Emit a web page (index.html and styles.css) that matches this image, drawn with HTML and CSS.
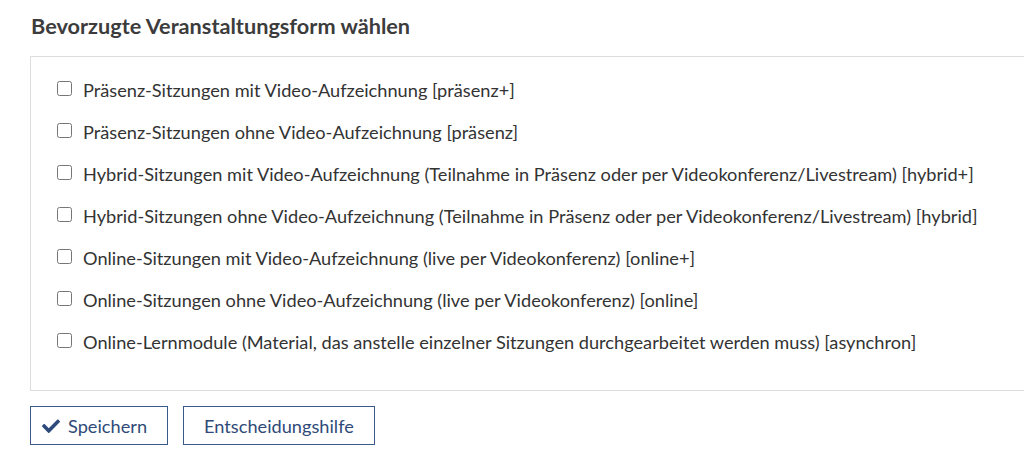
FILE: index.html
```html
<!DOCTYPE html>
<html lang="de">
<head>
    <meta charset="UTF-8">
    <meta name="viewport" content="width=device-width, initial-scale=1.0">
    <title>Bevorzugte Veranstaltungsform wählen</title>
    <link rel="stylesheet" href="styles.css">
</head>
<body>
    <h2 class="title">Bevorzugte Veranstaltungsform wählen</h2>
    <form id="formatForm">
        <div class="options">
            <label class="option"><input type="checkbox" name="format" value="praesenz+"> Präsenz-Sitzungen mit Video-Aufzeichnung [präsenz+]</label>
            <label class="option"><input type="checkbox" name="format" value="praesenz"> Präsenz-Sitzungen ohne Video-Aufzeichnung [präsenz]</label>
            <label class="option"><input type="checkbox" name="format" value="hybrid+"> Hybrid-Sitzungen mit Video-Aufzeichnung (Teilnahme in Präsenz oder per Videokonferenz/Livestream) [hybrid+]</label>
            <label class="option"><input type="checkbox" name="format" value="hybrid"> Hybrid-Sitzungen ohne Video-Aufzeichnung (Teilnahme in Präsenz oder per Videokonferenz/Livestream) [hybrid]</label>
            <label class="option"><input type="checkbox" name="format" value="online+"> Online-Sitzungen mit Video-Aufzeichnung (live per Videokonferenz) [online+]</label>
            <label class="option"><input type="checkbox" name="format" value="online"> Online-Sitzungen ohne Video-Aufzeichnung (live per Videokonferenz) [online]</label>
            <label class="option"><input type="checkbox" name="format" value="asynchron"> Online-Lernmodule (Material, das anstelle einzelner Sitzungen durchgearbeitet werden muss) [asynchron]</label>
        </div>
        <div class="actions">
            <button type="submit" class="btn">
                <svg class="icon" viewBox="0 0 512 400" width="18" height="14"><path d="M173.9 389.4l-166.4-166.4c-10-10-10-26.2 0-36.2l36.2-36.2c10-10 26.2-10 36.2 0L192 262.7 432.1 22.6c10-10 26.2-10 36.2 0l36.2 36.2c10 10 10 26.2 0 36.2l-294.4 294.4c-10 10-26.2 10-36.2 0z"/></svg>
                Speichern
            </button>
            <button type="button" class="btn">Entscheidungshilfe</button>
        </div>
    </form>
</body>
</html>
```

FILE: styles.css
```css
body {
    font-family: Lato, "Open Sans", sans-serif;
    margin: 0;
    padding: 0 0 0 30px;
    color: #333;
    background: #fff;
    overflow: hidden;
}

.title {
    font-size: 21.7px;
    font-weight: bold;
    color: #3c3c3c;
    margin: 13px 0 17px 1px;
    line-height: 26px;
}

.options {
    border: 1px solid #ddd;
    border-right: none;
    padding: 23px 0 38px 26px;
    display: flex;
    flex-direction: column;
    gap: 22px;
}

.option {
    display: flex;
    align-items: center;
    font-size: 18.2px;
    line-height: 20px;
    white-space: nowrap;
}

.option input {
    width: 15px;
    height: 15px;
    margin: 0 11px 3px 0;
}

.actions {
    display: flex;
    gap: 15px;
    margin-top: 15px;
}

.btn {
    font-family: Lato, "Open Sans", sans-serif;
    font-size: 18.2px;
    color: #2f4a78;
    background: #fff;
    border: 1px solid #3a5a8a;
    border-radius: 0;
    height: 39px;
    padding: 0 20px;
    display: flex;
    align-items: center;
    gap: 8px;
    cursor: pointer;
}

.btn:first-child {
    padding: 0 20px 0 11px;
}

.icon {
    fill: #2c4a7c;
}
```
